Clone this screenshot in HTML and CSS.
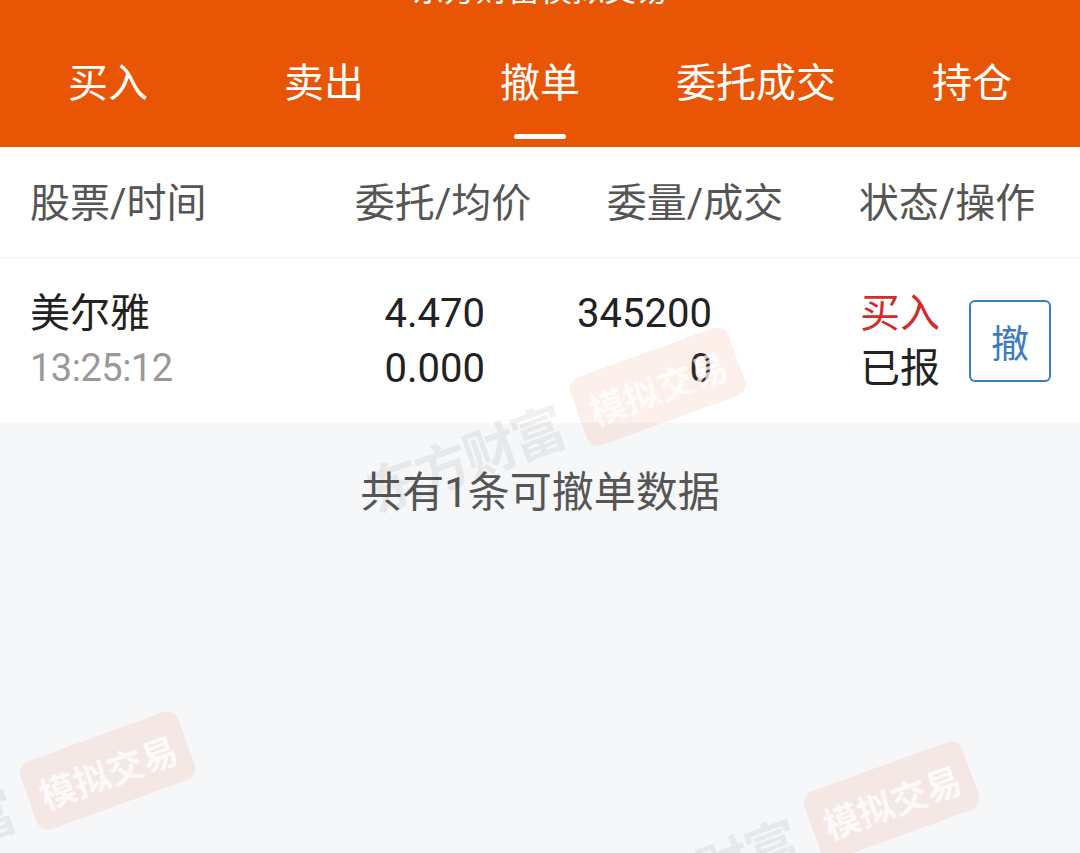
FILE: index.html
```html
<!DOCTYPE html>
<html lang="zh-CN">

<head>
    <meta charset="UTF-8">
    <meta name="viewport" content="width=device-width, initial-scale=1.0">
    <title>撤单</title>
    <link rel="stylesheet" href="styles.css">
</head>

<body>
    <div class="page">
        <div class="header">
            <div class="title">东方财富模拟交易</div>
            <div class="tabs">
                <div class="tab"><span class="tab-label">买入</span></div>
                <div class="tab"><span class="tab-label">卖出</span></div>
                <div class="tab active"><span class="tab-label">撤单</span><span class="bar"></span></div>
                <div class="tab"><span class="tab-label">委托成交</span></div>
                <div class="tab"><span class="tab-label">持仓</span></div>
            </div>
        </div>

        <div class="thead">
            <div class="th first">股票/时间</div>
            <div class="th">委托/均价</div>
            <div class="th">委量/成交</div>
            <div class="th">状态/操作</div>
        </div>

        <div class="row">
            <div class="cell name">
                <div class="main">美尔雅</div>
                <div class="sub">13:25:12</div>
            </div>
            <div class="cell num">
                <div>4.470</div>
                <div>0.000</div>
            </div>
            <div class="cell num">
                <div>345200</div>
                <div>0</div>
            </div>
            <div class="cell status">
                <div class="state">
                    <div class="buy">买入</div>
                    <div>已报</div>
                </div>
                <button class="cancel">撤</button>
            </div>
        </div>

        <div class="summary">共有1条可撤单数据</div>

        <!-- watermarks -->
        <div class="mark mark1"><span class="mark-brand">东方财富</span><span class="mark-tag">模拟交易</span></div>
        <div class="mark mark2"><span class="mark-brand">东方财富</span><span class="mark-tag">模拟交易</span></div>
        <div class="mark mark3"><span class="mark-brand">东方财富</span><span class="mark-tag">模拟交易</span></div>
    </div>
</body>

</html>
```

FILE: styles.css
```css
* {
    margin: 0;
    padding: 0;
    box-sizing: border-box;
}

body {
    width: 1080px;
    height: 853px;
    overflow: hidden;
    background-color: #f6f7f9;
    font-family: Roboto, "Noto Sans CJK SC", sans-serif;
}

.page {
    position: relative;
    height: 853px;
    overflow: hidden;
}

.header {
    height: 147px;
    background-color: #e85504;
    overflow: hidden;
}

.title {
    margin-top: -30px;
    height: 40px;
    line-height: 40px;
    text-align: center;
    color: white;
    font-size: 32px;
}

.tabs {
    display: flex;
    height: 137px;
}

.tab {
    flex: 1;
    display: flex;
    flex-direction: column;
    align-items: center;
    padding-top: 49px;
}

.tab-label {
    color: white;
    font-size: 40px;
    line-height: 50px;
}

.bar {
    width: 52px;
    height: 5px;
    margin-top: 25px;
    border-radius: 3px;
    background-color: white;
}

.thead {
    display: flex;
    align-items: center;
    height: 111px;
    padding: 0 20px 4px 30px;
    gap: 26px;
    background-color: white;
    border-bottom: 1px solid #f0f0f0;
}

.th {
    width: 226px;
    text-align: center;
    color: #555;
    font-size: 40px;
}

.th.first {
    flex: 1;
    text-align: left;
}

.row {
    display: grid;
    grid-template-columns: 270px 185px 227px 1fr;
    align-items: center;
    height: 165px;
    padding: 0 29px 0 30px;
    background-color: white;
    font-size: 40px;
    line-height: 55px;
    color: #222;
}

.cell.num {
    text-align: right;
}

.name .sub {
    color: #999;
    font-size: 38px;
    letter-spacing: -0.5px;
}

.cell.status {
    display: flex;
    justify-content: flex-end;
    align-items: center;
    gap: 29px;
}

.buy {
    color: #d42b2b;
}

.cancel {
    width: 82px;
    height: 82px;
    border: 2px solid #3b7bc4;
    border-radius: 6px;
    background-color: white;
    color: #3b7bc4;
    font-size: 38px;
    font-family: "Noto Sans CJK SC", sans-serif;
}

.summary {
    padding-top: 42px;
    line-height: 56px;
    text-align: center;
    color: #555;
    font-size: 42px;
}

.mark {
    position: absolute;
    display: flex;
    align-items: center;
    gap: 20px;
    transform: rotate(-20deg);
    transform-origin: left center;
    pointer-events: none;
}

.mark-brand {
    font-size: 54px;
    font-weight: bold;
    color: rgba(0, 0, 0, 0.06);
    letter-spacing: -3px;
}

.mark-tag {
    padding: 10px 12px;
    border-radius: 12px;
    background-color: rgba(240, 100, 50, 0.10);
    color: rgba(255, 255, 255, 0.75);
    font-size: 36px;
    font-weight: bold;
}

.mark1 {
    left: 368px;
    top: 452px;
}

.mark2 {
    left: -182px;
    top: 836px;
}

.mark3 {
    left: 602px;
    top: 866px;
}
```
